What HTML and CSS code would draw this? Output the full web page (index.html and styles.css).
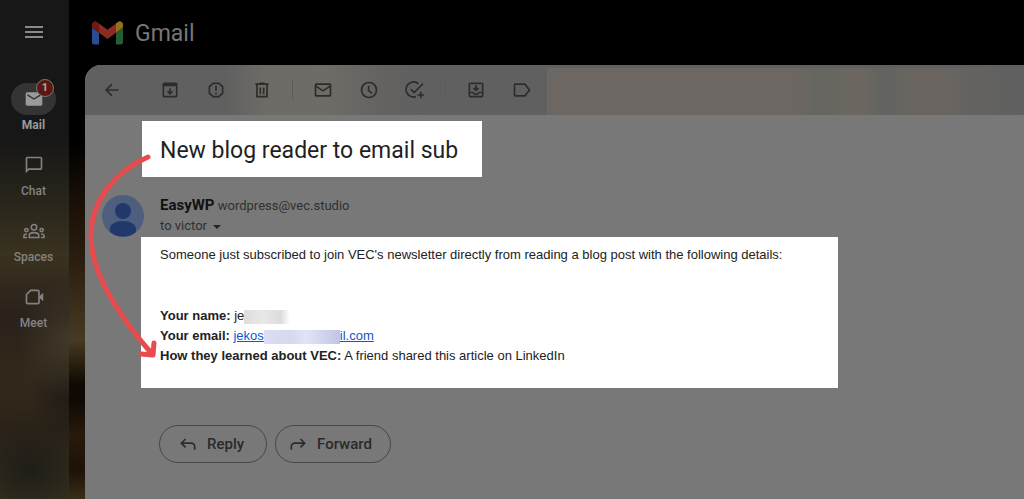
FILE: index.html
```html
<!DOCTYPE html>
<html lang="en">
<head>
  <meta charset="UTF-8">
  <meta name="viewport" content="width=device-width, initial-scale=1.0">
  <title>Gmail</title>
  <link rel="stylesheet" href="styles.css">
</head>
<body>
  <aside class="sidebar">
    <button class="menu-btn" aria-label="Main menu">
      <svg viewBox="0 0 20 24"><path d="M1 7h18M1 12h18M1 17h18" stroke="currentColor" stroke-width="2"/></svg>
    </button>
    <nav>
      <a href="#" class="nav-item active">
        <span class="nav-icon">
          <svg viewBox="0 0 24 24" fill="currentColor"><path d="M20 4H4a2 2 0 0 0-2 2v12a2 2 0 0 0 2 2h16a2 2 0 0 0 2-2V6a2 2 0 0 0-2-2zm0 4-8 5-8-5V6l8 5 8-5z"/></svg>
          <span class="badge">1</span>
        </span>
        Mail
      </a>
      <a href="#" class="nav-item">
        <span class="nav-icon">
          <svg viewBox="0 0 24 24" fill="currentColor"><path d="M4 4h16v12H5.200L4 17.200V4m0-2a2 2 0 0 0-2 2v18l4-4h14a2 2 0 0 0 2-2V4a2 2 0 0 0-2-2H4z"/></svg>
        </span>
        Chat
      </a>
      <a href="#" class="nav-item">
        <span class="nav-icon">
          <svg class="wide" viewBox="0 0 24 24" fill="none" stroke="currentColor" stroke-width="1.700"><circle cx="12" cy="8" r="3"/><circle cx="3.700" cy="11" r="1.800"/><circle cx="20.300" cy="11" r="1.800"/><path d="M6.800 19v-2c0-2 2.500-3.200 5.200-3.200s5.200 1.200 5.200 3.200v2zM4.500 19H1v-1.700c0-1.300 1.200-2 3.300-2M19.500 19H23v-1.700c0-1.300-1.200-2-3.300-2"/></svg>
        </span>
        Spaces
      </a>
      <a href="#" class="nav-item">
        <span class="nav-icon">
          <svg viewBox="0 0 24 24"><path d="M8 4h8.500a1.500 1.500 0 0 1 1.500 1.500v13a1.500 1.500 0 0 1-1.500 1.500h-12A1.500 1.500 0 0 1 3 18.500V9z" fill="none" stroke="currentColor" stroke-width="2"/><path d="M18 11.500 23 7v10l-5-4.500z" fill="currentColor"/></svg>
        </span>
        Meet
      </a>
    </nav>
  </aside>

  <div class="main">
    <header class="header">
      <svg class="logo" viewBox="52 42 88 66" aria-hidden="true">
        <path fill="#2b4c8f" d="M58 108h14V74L52 59v43a6 6 0 0 0 6 6"/>
        <path fill="#255e32" d="M120 108h14a6 6 0 0 0 6-6V59l-20 15"/>
        <path fill="#93731a" d="M120 48v26l20-15v-8c0-7.400-8.500-11.700-14.400-7.200"/>
        <path fill="#8c2b22" d="M72 74V48l24 18 24-18v26L96 92"/>
        <path fill="#701a15" d="M52 51v8l20 15V48l-5.600-4.200C60.500 39.300 52 43.600 52 51"/>
      </svg>
      <span class="brand">Gmail</span>
    </header>

    <main class="panel">
      <div class="toolbar">
        <button class="back" aria-label="Back"><svg viewBox="0 0 24 24"><path d="M20 12H5M12 5l-7 7 7 7"/></svg></button>
        <button aria-label="Archive"><svg viewBox="0 0 24 24"><rect x="4" y="4" width="16" height="16" rx="1"/><path d="M4 6h16" stroke-width="3"/><path d="M12 10v6M9 13.500l3 3 3-3"/></svg></button>
        <button aria-label="Report spam"><svg viewBox="0 0 24 24"><path d="M8.300 4h7.400L20 8.300v7.400L15.700 20H8.300L4 15.700V8.300zM12 7v6M12 15v2"/></svg></button>
        <button aria-label="Delete"><svg viewBox="0 0 24 24"><path d="M6 6v14h12V6M4 5h16M9 4h6M10 9v8M14 9v8"/></svg></button>
        <span class="divider"></span>
        <button aria-label="Mark as unread"><svg viewBox="0 0 24 24"><rect x="3" y="5" width="18" height="14" rx="1"/><path d="m3 7 9 6 9-6"/></svg></button>
        <button aria-label="Snooze"><svg viewBox="0 0 24 24"><circle cx="12" cy="12" r="9"/><path d="M11.500 7v5.500l4 3.500"/></svg></button>
        <button aria-label="Add to tasks"><svg viewBox="0 0 24 24"><path d="M16 4.500A9 9 0 1 0 13 20M7 11l4 4L21.500 4.500M19 14v8M15 18h8"/></svg></button>
        <span class="divider"></span>
        <button aria-label="Move to"><svg viewBox="0 0 24 24"><rect x="4" y="4" width="16" height="16" rx="1"/><path d="M4 15h4.500c1 3 6 3 7 0H20M12 6v6M9 9.500l3 3 3-3"/></svg></button>
        <button aria-label="Labels"><svg viewBox="0 0 24 24"><path d="M4 5h11.500l5.500 7-5.500 7H4a1 1 0 0 1-1-1V6a1 1 0 0 1 1-1z"/></svg></button>
        <div class="toolbar-cover"></div>
      </div>

      <article class="message">
        <h1 class="subject">New blog reader to email sub</h1>

        <div class="sender">
          <svg class="avatar" viewBox="0 0 42 42" aria-hidden="true">
            <circle cx="21" cy="21" r="21" fill="#4d5e7e"/>
            <circle cx="21" cy="16" r="8" fill="#22376b"/>
            <path d="M8 37v-3c0-5 6-8 13-8s13 3 13 8v3a21 21 0 0 1-26 0z" fill="#22376b"/>
          </svg>
          <div class="sender-info">
            <div><strong>EasyWP</strong> <span class="address">wordpress@vec.studio</span></div>
            <div class="to">to victor <span class="caret"></span></div>
          </div>
        </div>

        <div class="content">
          <p>Someone just subscribed to join VEC's newsletter directly from reading a blog post with the following details:</p>
          <p>
            <b>Your name:</b> je<span class="redact redact-name"></span><br>
            <b>Your email:</b> <a href="#">jekos<span class="redact redact-email"></span>il.com</a><br>
            <b>How they learned about VEC:</b> A friend shared this article on LinkedIn
          </p>
        </div>

        <div class="actions">
          <button class="reply"><svg viewBox="0 0 24 24"><path d="M9 6 4 11l5 5M4 11h12a4 4 0 0 1 4 4v4"/></svg>Reply</button>
          <button class="forward"><svg viewBox="0 0 24 24"><path d="m15 6 5 5-5 5M20 11H8a4 4 0 0 0-4 4v4"/></svg>Forward</button>
        </div>

        <svg class="arrow" viewBox="0 0 80 220" aria-hidden="true">
          <path d="M63 12C33 25 6 53 6 91c0 38 27 79 61 118M56 209l12 1 1-12"/>
        </svg>
      </article>
    </main>
  </div>
</body>
</html>
```
FILE: styles.css
```css
* { box-sizing: border-box; margin: 0; padding: 0; }

body {
  display: flex;
  min-height: 100vh;
  font-family: Roboto, sans-serif;
  color: #1b1b1b;
  background: linear-gradient(#000 0, #000 140px, #190f07 200px, #2a1e10 260px, #463a22 340px, #0f0803 385px, #0f0803 400px, #281a0c 435px, #1c1206 470px, #3a2d18 499px);
}

button {
  font: inherit;
  color: inherit;
  background: none;
  border: none;
  cursor: pointer;
}

/* Sidebar */
.sidebar {
  width: 69px;
  flex-shrink: 0;
  padding: 20px 2px 0 0;
  color: #8a8a8a;
  background:
    radial-gradient(50px 60px at 100% 340px, rgba(84, 76, 54, 0.5), transparent),
    radial-gradient(40px 50px at 100% 395px, rgba(20, 20, 18, 0.6), transparent),
    radial-gradient(60px 60px at 30px 470px, rgba(26, 26, 22, 0.8), transparent),
    linear-gradient(#171717 0, #171717 140px, #2a261c 205px, #3a3220 255px, #2a211a 315px, #33291b 380px, #2d2419 430px, #38311f 499px);
}

.menu-btn {
  display: block;
  width: 20px;
  height: 24px;
  margin: 0 auto 39px;
}

.menu-btn svg {
  display: block;
  width: 20px;
  height: 24px;
}

.nav-item {
  display: block;
  margin-bottom: 14px;
  font-size: 12px;
  font-weight: 500;
  line-height: 20px;
  text-align: center;
  text-decoration: none;
  color: #828282;
}

.nav-item.active {
  font-weight: 700;
  color: #9a9a9a;
}

.nav-icon {
  position: relative;
  display: flex;
  align-items: center;
  justify-content: center;
  width: 45px;
  height: 32px;
  margin: 0 auto;
  border-radius: 16px;
}

.nav-icon svg {
  width: 20px;
  height: 20px;
}

.nav-icon svg.wide {
  width: 22px;
  height: 22px;
}

.active .nav-icon {
  background: #343434;
}

.badge {
  position: absolute;
  top: -4px;
  right: 2px;
  width: 18px;
  height: 18px;
  border: 1px solid #777;
  border-radius: 50%;
  font-size: 11px;
  line-height: 16px;
  color: #aaa;
  background: #5e1710;
}

/* Header */
.main {
  flex: 1;
  min-width: 0;
  display: flex;
  flex-direction: column;
  padding-left: 16px;
}

.header {
  display: flex;
  align-items: center;
  gap: 12px;
  height: 65px;
  margin-left: -16px;
  padding-left: 23px;
  background: #000;
}

.logo {
  width: 31px;
  height: 24px;
}

.brand {
  font-size: 23px;
  line-height: 28px;
  padding-top: 2px;
  color: #777;
}

/* Message panel */
.panel {
  flex: 1;
  border-top-left-radius: 16px;
  overflow: hidden;
  background: #787878;
}

.toolbar {
  display: flex;
  align-items: center;
  height: 50px;
  padding-left: 4px;
  background: linear-gradient(90deg, #606060 0, #606060 140px, #6d6b65 180px, #6e6c66 240px, #636261 300px, #606060 340px);
}

.toolbar button {
  flex-shrink: 0;
  width: 46px;
  height: 46px;
}

.toolbar .back {
  margin-right: 12px;
}

.toolbar svg,
.actions svg {
  width: 20px;
  height: 20px;
  fill: none;
  stroke: #2c2c2c;
  stroke-width: 2;
}

.toolbar button svg {
  display: block;
  margin: 0 auto;
}

.divider {
  width: 1px;
  height: 20px;
  margin: 0 7px;
  background: #5c5c5b;
}

.toolbar-cover {
  flex: 1;
  align-self: flex-end;
  height: 47px;
  margin-left: 2px;
  border-top-left-radius: 3px;
  background: linear-gradient(90deg, #6c6763 0, #6c6763 52%, #666661 56%, #6b6660 63%, #6b6660 67%, #63635f 70%, #6a6560 77%, #6a6560 83%, #636260 90%, #606060 100%);
}

.message {
  position: relative;
  padding: 6px 16px 36px 56px;
}

.subject {
  width: fit-content;
  margin-left: 1px;
  padding: 14px 24px 10px 18px;
  font-size: 23px;
  font-weight: 400;
  line-height: 32px;
  color: #1f1f1f;
  background: #fff;
}

.sender {
  display: flex;
  gap: 16px;
  margin: 18px 0 0 -39px;
}

.avatar {
  width: 42px;
  height: 42px;
}

.sender-info {
  font-size: 13px;
  line-height: 20px;
  color: #303030;
}

.sender-info strong {
  font-size: 15px;
  color: #111;
}

.caret {
  display: inline-block;
  margin-left: 3px;
  border: 4px solid transparent;
  border-top-color: #252525;
  border-bottom: none;
  vertical-align: middle;
}

.content {
  width: fit-content;
  padding: 8px 56px 22px 19px;
  font-family: "Liberation Sans", Arial, sans-serif;
  font-size: 13px;
  line-height: 20px;
  color: #222;
  background: #fff;
}

.content p + p {
  margin-top: 41px;
}

.content a {
  color: #1155cc;
}

.redact {
  display: inline-block;
  height: 14px;
  vertical-align: middle;
}

.redact-name {
  width: 46px;
  background: linear-gradient(90deg, #ddd, #e8e8e8 40%, #dcdcdc 80%, #fff);
}

.redact-email {
  width: 76px;
  background: linear-gradient(90deg, #dcdff2, #d5d8ef 35%, #e2e3f3 55%, #bfc5e8);
}

.actions {
  display: flex;
  gap: 8px;
  margin: 37px 0 0 18px;
}

.actions button {
  display: flex;
  align-items: center;
  gap: 9px;
  height: 38px;
  border: 1px solid #474747;
  border-radius: 19px;
  font-size: 15px;
  font-weight: 500;
  color: #2a2a2a;
}

.actions .reply {
  padding: 0 22px 0 18px;
}

.actions .forward {
  padding: 0 18px 0 12px;
}

.arrow {
  position: absolute;
  top: 30px;
  left: 0;
  width: 80px;
  height: 220px;
  fill: none;
  stroke: #e84a4d;
  stroke-width: 5;
  stroke-linecap: round;
  stroke-linejoin: round;
}
```
